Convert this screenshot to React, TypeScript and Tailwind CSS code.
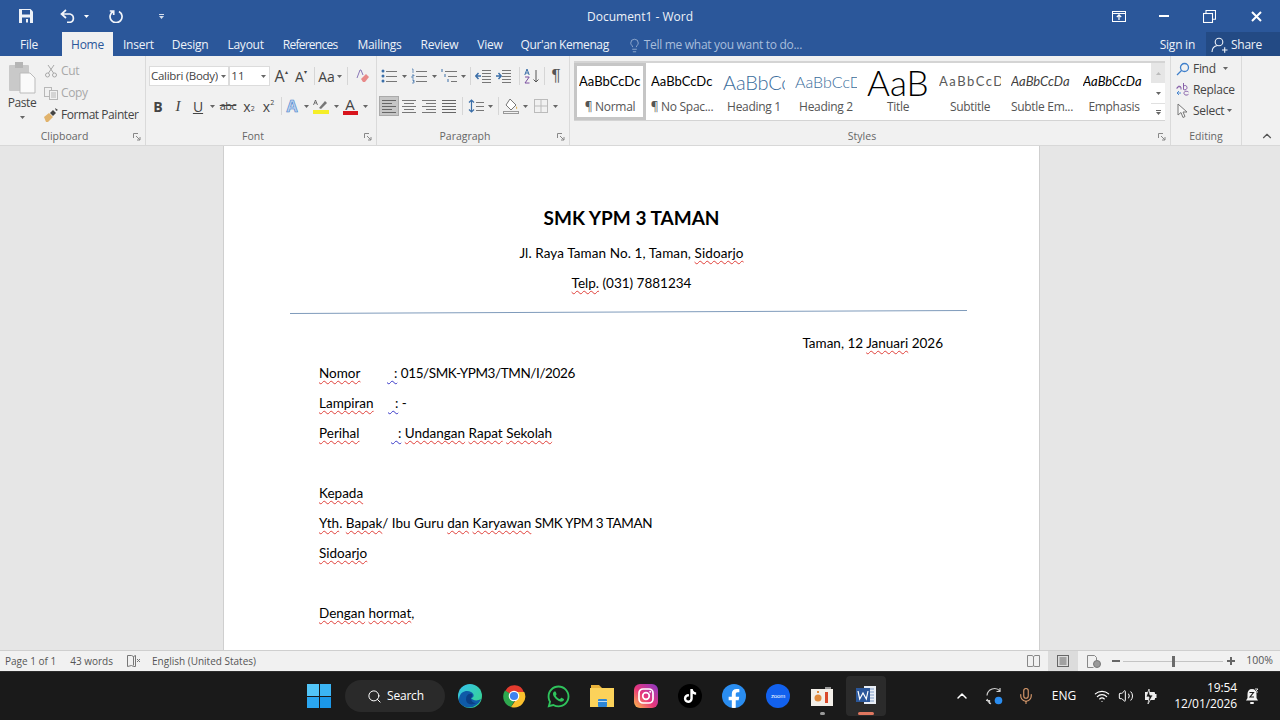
import React from 'react';
import { FaWhatsapp, FaTiktok, FaFacebookF } from 'react-icons/fa';
import { Search, Mic, Volume2, Wifi, ChevronUp, Lightbulb } from 'lucide-react';

const UI = "font-['Open_Sans',sans-serif]";

// --- small helpers ---

const Caret: React.FC<{ className?: string }> = ({ className }) => (
  <svg width="5" height="3" viewBox="0 0 5 3" className={className}>
    <path d="M0 0h5L2.5 3z" fill="#666" />
  </svg>
);

const Launcher = () => (
  <svg width="8" height="8" viewBox="0 0 8 8" fill="none" stroke="#888">
    <path d="M.5 5V.5H5M3 3l4 4M7 4v3H4" />
  </svg>
);

const Lines: React.FC<{ x?: number; w?: number; ys: number[]; color?: string; widths?: number[] }> = ({ x = 0, w = 14, ys, color = '#777', widths }) => (
  <>
    {ys.map((y, i) => {
      const lw = widths ? widths[i] : w;
      return <rect key={y} x={x} y={y} width={lw} height="1" fill={color} />;
    })}
  </>
);

const Ico: React.FC<{ children: React.ReactNode }> = ({ children }) => (
  <svg width="16" height="16" viewBox="0 0 16 16" fill="none">
    {children}
  </svg>
);

const Slot: React.FC<{ w: string; children?: React.ReactNode; className?: string }> = ({ w, children, className }) => (
  <div className={`${w} flex h-5 shrink-0 items-center justify-center ${className ?? ''}`}>{children}</div>
);

const Sep = () => <div className="h-[18px] w-px shrink-0 bg-[#d6d6d6]" />;

const Group: React.FC<{ w: string; label: string; launcher?: boolean; children: React.ReactNode }> = ({ w, label, launcher, children }) => (
  <div className={`${w} flex shrink-0 flex-col border-r border-[#dadada]`}>
    <div className="min-h-0 flex-1">{children}</div>
    <div className="flex h-[18px] items-center pt-[2px] text-[10.5px] text-[#666]">
      <div className="flex-1 text-center">{label}</div>
      {launcher && (
        <div className="flex w-[16px] justify-end pr-[4px]">
          <Launcher />
        </div>
      )}
    </div>
  </div>
);

// --- title bar and tabs ---

const TitleBar = () => (
  <div className="flex h-8 items-center bg-[#2b579a] text-white">
    <div className="flex flex-1 items-center">
      <div className="flex w-[46px] justify-center pl-[6px]">
        <svg width="14" height="14" viewBox="0 0 14 14">
          <path d="M0 0h11.5L14 2.5V14H0z" fill="#eef2f8" />
          <rect x="3" y="1" width="8" height="4.5" fill="#2b579a" />
          <rect x="3" y="8.5" width="8" height="5.5" fill="#2b579a" />
          <rect x="7" y="10" width="2" height="3.5" fill="#eef2f8" />
        </svg>
      </div>
      <div className="ml-[14px] flex items-center gap-[8px]">
        <svg width="16" height="14" viewBox="0 0 16 14" fill="none" stroke="#f2f5fa" strokeWidth="1.7">
          <path d="M6 1 1.5 5 6 9M2 5h8a4.3 4.3 0 0 1 0 8.4H7" />
        </svg>
        <Caret className="[&>path]:fill-white" />
      </div>
      <div className="ml-[20px]">
        <svg width="14" height="14" viewBox="0 0 14 14" fill="none" stroke="#f2f5fa" strokeWidth="1.7">
          <path d="M4.5 2.2A6 6 0 1 0 10 2.4M4.7 6V2H.8" />
        </svg>
      </div>
      <div className="ml-[36px] flex flex-col items-center gap-[1px]">
        <div className="h-px w-[5px] bg-white/80" />
        <Caret className="[&>path]:fill-white/80" />
      </div>
    </div>
    <div className="pt-[2px] text-center text-[12px] text-[#eef2f8]">Document1 - Word</div>
    <div className="flex flex-1 items-center justify-end">
      <svg width="14" height="11" viewBox="0 0 14 11" fill="none" stroke="#fff">
        <rect x=".5" y=".5" width="13" height="10" />
        <path d="M.5 2.5h13" />
        <path d="M7 9V4M4.8 6 7 3.8 9.2 6" strokeWidth="1.2" />
      </svg>
      <div className="ml-[33px] h-[2px] w-[10px] bg-white" />
      <svg width="13" height="13" viewBox="0 0 13 13" fill="none" stroke="#fff" className="ml-[34px]">
        <rect x=".5" y="3.5" width="9" height="9" strokeWidth="1.1" />
        <path d="M3 3.5v-3h9.5v8.8H9.5" strokeWidth="1.1" />
      </svg>
      <svg width="11" height="11" viewBox="0 0 11 11" stroke="#fff" strokeWidth="2" className="ml-[35px] mr-[18px]">
        <path d="m1 1 9 9M10 1l-9 9" />
      </svg>
    </div>
  </div>
);

const TabBar = () => (
  <div className="flex h-6 items-stretch bg-[#2b579a] text-[12px] tracking-[-0.25px] text-[#eef2f8] [&>div]:pt-[2px]">
    <div className="ml-[20px] flex items-center">File</div>
    <div className="ml-[24px] flex w-[51px] items-center justify-center bg-[#f1f1f1] text-[#2b579a]">Home</div>
    <div className="ml-[10px] flex items-center">Insert</div>
    <div className="ml-[18px] flex items-center">Design</div>
    <div className="ml-[19px] flex items-center">Layout</div>
    <div className="ml-[19px] flex items-center tracking-[-0.75px]">References</div>
    <div className="ml-[20px] flex items-center">Mailings</div>
    <div className="ml-[19px] flex items-center">Review</div>
    <div className="ml-[19px] flex items-center">View</div>
    <div className="ml-[18px] flex items-center whitespace-nowrap tracking-[-0.4px]">Qur'an Kemenag</div>
    <div className="ml-[18px] flex items-center text-[#a9bedc]">
      <Lightbulb size={15} strokeWidth={1.2} />
      <span className="ml-[2px] tracking-[-0.3px]">Tell me what you want to do...</span>
    </div>
    <div className="ml-auto flex items-center">Sign in</div>
    <div className="ml-[11px] flex w-[74px] items-center bg-[#234a84] pl-[5px]">
      <svg width="17" height="16" viewBox="0 0 17 16" fill="none" stroke="#eef2f8" strokeWidth="1.1">
        <circle cx="8" cy="5" r="3.800" />
        <path d="M1 15c0-3.500 2.500-6 5.500-6.500M11 13h5.500M13.700 10.300v5.400" />
      </svg>
      <span className="ml-[3px] text-[12px]">Share</span>
    </div>
  </div>
);

// --- ribbon groups ---

const Clipboard = () => (
  <div className="flex h-full">
    <div className="flex w-[44px] flex-col items-center pt-[6px]">
      <svg width="30" height="32" viewBox="0 0 30 32">
        <rect x="2" y="3" width="20" height="26" rx="1" fill="#c9c9c9" />
        <rect x="8" y="0" width="8" height="6" fill="#b5b5b5" />
        <path d="M13 11h10l5 5v15H13z" fill="#fafafa" stroke="#bbb" />
      </svg>
      <div className="mt-[1px] text-[12px] leading-[16px] tracking-[-0.4px] text-[#444]">Paste</div>
      <Caret className="mt-[5px]" />
    </div>
    <div className="flex flex-col pt-[4px] text-[12px] tracking-[-0.35px]">
      <div className="flex h-[22px] items-center text-[#a8a8a8]">
        <svg width="14" height="14" viewBox="0 0 14 14" fill="none" stroke="#a8a8a8"><path d="M4 1l5.500 8M10 1 4.500 9" /><circle cx="3.500" cy="11" r="2" /><circle cx="10.500" cy="11" r="2" /></svg>
        <span className="ml-[3px]">Cut</span>
      </div>
      <div className="flex h-[22px] items-center text-[#a8a8a8]">
        <svg width="14" height="14" viewBox="0 0 14 14" fill="none" stroke="#b8b8b8"><rect x=".5" y="1.500" width="7" height="9" /><rect x="5.500" y="4.500" width="8" height="9" fill="#f1f1f1" /><path d="M7 7h5M7 9h5M7 11h5" /></svg>
        <span className="ml-[3px]">Copy</span>
      </div>
      <div className="flex h-[22px] items-center whitespace-nowrap tracking-[-0.45px] text-[#444]">
        <svg width="14" height="14" viewBox="0 0 14 14"><path d="M0 9l5-4 4 4-5 5H2z" fill="#e1b36c" /><path d="M6 5l3-3 3 3-3 3z" fill="#444" /><path d="M11 0l3 2-2 1z" fill="#444" /></svg>
        <span className="ml-[3px]">Format Painter</span>
      </div>
    </div>
  </div>
);

const Font = () => (
  <div className="flex flex-col pt-[10px] text-[#444]">
    <div className="flex h-5 items-center pl-[3px]">
      <div className="flex h-[20px] w-[81px] items-center justify-between bg-white pl-[2px] pr-[3px] text-[11.500px] tracking-[-0.3px] ring-1 ring-inset ring-[#dcdcdc]">
        <span className="overflow-hidden whitespace-nowrap">Calibri (Body)</span>
        <Caret className="ml-[2px] shrink-0" />
      </div>
      <div className="flex h-[20px] w-[41px] items-center justify-between bg-white pl-[2px] pr-[4px] text-[11.500px] ring-1 ring-inset ring-[#dcdcdc]">
        <span>11</span>
        <Caret />
      </div>
      <Slot w="w-[20px]" className="ml-[1px] text-[16px]">A<span className="-mt-[8px] text-[6px]">▴</span></Slot>
      <Slot w="w-[20px]" className="text-[14px]">A<span className="-mt-[8px] text-[6px]">▾</span></Slot>
      <div className="ml-[3px] mr-[2px]"><Sep /></div>
      <Slot w="w-[26px]" className="text-[14px]">Aa<Caret className="ml-[2px]" /></Slot>
      <div className="ml-[4px] mr-[2px]"><Sep /></div>
      <Slot w="w-[26px]">
        <svg width="14" height="14" viewBox="0 0 14 14"><path d="M1 9 4 1h1l2 5" fill="none" stroke="#8a78b8" /><path d="m5 10 5-5 3 3-4 5H7z" fill="#e88a8a" /></svg>
      </Slot>
    </div>
    <div className="mt-[10px] flex h-5 items-center pl-[3px]">
      <Slot w="w-[18px]" className="text-[14px] font-bold">B</Slot>
      <Slot w="w-[22px]" className="font-['Liberation_Serif',serif] text-[15px] italic">I</Slot>
      <Slot w="w-[18px]" className="text-[14px] underline">U</Slot>
      <Slot w="w-[10px]"><Caret /></Slot>
      <Slot w="w-[22px]" className="text-[11px] tracking-[-0.5px] line-through">abc</Slot>
      <Slot w="w-[20px]" className="text-[14px]">x<span className="mt-[6px] text-[7px]">2</span></Slot>
      <Slot w="w-[19px]" className="text-[14px]">x<span className="-mt-[6px] text-[7px]">2</span></Slot>
      <div className="ml-[3px]"><Sep /></div>
      <Slot w="w-[20px]" className="text-[16px] font-bold text-[#b9d0ee] [-webkit-text-stroke:0.6px_#3f7fcb]">A</Slot>
      <Slot w="w-[8px]"><Caret /></Slot>
      <Slot w="w-[22px]">
        <svg width="18" height="16" viewBox="0 0 18 16"><path d="M1.500 7 3.500 2 5.500 7M2.300 5h2.500" fill="none" stroke="#555" strokeWidth=".8" /><path d="m7 10 6-7 2 2-6 6z" fill="#777" /><rect x="1" y="12" width="16" height="4" fill="#f5ee28" /></svg>
      </Slot>
      <Slot w="w-[8px]"><Caret /></Slot>
      <Slot w="w-[20px]">
        <div className="flex flex-col items-center leading-none">
          <span className="text-[15px] leading-[13px]">A</span>
          <div className="h-[4px] w-[15px] bg-[#d8141c]" />
        </div>
      </Slot>
      <Slot w="w-[10px]"><Caret /></Slot>
    </div>
  </div>
);

const Paragraph = () => (
  <div className="flex flex-col pt-[10px]">
    <div className="flex h-5 items-center pl-[2px]">
      <Slot w="w-[20px]"><Ico><circle cx="2" cy="3" r="1.500" fill="#3a6ea8" /><circle cx="2" cy="8" r="1.500" fill="#3a6ea8" /><circle cx="2" cy="13" r="1.500" fill="#3a6ea8" /><Lines x={5} w={11} ys={[3, 8, 13]} /></Ico></Slot>
      <Slot w="w-[10px]"><Caret /></Slot>
      <Slot w="w-[20px]"><Ico><path d="M1 1h1v4M1 7h2v1H1v2h2M1 12h2v1H2h1v2H1" stroke="#3a6ea8" strokeWidth=".7" /><Lines x={5} w={11} ys={[3, 8, 13]} /></Ico></Slot>
      <Slot w="w-[10px]"><Caret /></Slot>
      <Slot w="w-[20px]"><Ico><path d="M1 1v3M4 6v3M7 11v3" stroke="#3a6ea8" /><Lines x={4} w={12} ys={[3]} /><Lines x={7} w={9} ys={[8]} /><Lines x={10} w={6} ys={[13]} /></Ico></Slot>
      <Slot w="w-[8px]"><Caret /></Slot>
      <div className="ml-[3px] mr-[2px]"><Sep /></div>
      <Slot w="w-[20px]"><Ico><path d="M6 8H1M3.500 5 .8 8l2.700 3" stroke="#3a6ea8" strokeWidth="1.400" /><Lines x={7} w={9} ys={[2, 5, 8, 11, 14]} /></Ico></Slot>
      <Slot w="w-[20px]"><Ico><path d="M1 8h5M3.500 5 6.200 8l-2.700 3" stroke="#3a6ea8" strokeWidth="1.400" /><Lines x={7} w={9} ys={[2, 5, 8, 11, 14]} /></Ico></Slot>
      <div className="ml-[6px] mr-[2px]"><Sep /></div>
      <Slot w="w-[20px]"><Ico><path d="M.8 7 3 1l2.200 6M1.600 5h2.800" stroke="#3a6ea8" /><path d="M1 9h4.200L1 15h4.500" stroke="#7a4fa0" /><path d="M12 2v12M9.500 11.500 12 14l2.500-2.500" stroke="#555" /></Ico></Slot>
      <div className="ml-[2px] mr-[1px]"><Sep /></div>
      <Slot w="w-[20px]" className="font-['Liberation_Sans',sans-serif] text-[17px] text-[#555]">¶</Slot>
    </div>
    <div className="mt-[10px] flex h-5 items-center pl-[2px]">
      <Slot w="w-[20px]" className="bg-[#c6c6c6] ring-1 ring-inset ring-[#aaaaaa]"><Ico><Lines ys={[2, 5, 8, 11, 14]} x={1} widths={[14, 10, 14, 10, 14]} color="#666" /></Ico></Slot>
      <Slot w="w-[20px]"><Ico><Lines ys={[2, 8, 14]} x={1} w={14} /><Lines ys={[5, 11]} x={3} w={10} /></Ico></Slot>
      <Slot w="w-[20px]"><Ico><Lines ys={[2, 8, 14]} x={1} w={14} /><Lines ys={[5, 11]} x={5} w={10} /></Ico></Slot>
      <Slot w="w-[20px]"><Ico><Lines ys={[2, 5, 8, 11, 14]} x={1} w={14} color="#666" /></Ico></Slot>
      <div className="ml-[3px] mr-[3px]"><Sep /></div>
      <Slot w="w-[19px]"><Ico><path d="M3.500 2v12M1 4.500 3.500 2 6 4.500M1 11.500 3.500 14 6 11.500" stroke="#3a6ea8" strokeWidth="1.200" /><Lines x={8} w={8} ys={[4, 8, 12]} /></Ico></Slot>
      <Slot w="w-[10px]"><Caret /></Slot>
      <div className="ml-[3px] mr-[2px]"><Sep /></div>
      <Slot w="w-[20px]"><Ico><path d="m7 1 6 6-5 5-5-5z" stroke="#777" fill="#fff" /><path d="M13 8q2 2 1 3t-1-3" fill="#d9a648" /><rect x=".5" y="13.500" width="15" height="2" fill="none" stroke="#999" /></Ico></Slot>
      <Slot w="w-[8px]"><Caret /></Slot>
      <Slot w="w-[20px]" className="ml-[2px]"><Ico><rect x="1.500" y="1.500" width="13" height="13" stroke="#bbb" /><path d="M8 1.500v13M1.500 8h13" stroke="#bbb" /></Ico></Slot>
      <Slot w="w-[8px]"><Caret /></Slot>
    </div>
  </div>
);

const STYLES = [
  { label: '¶ Normal', prev: 'AaBbCcDc', cls: 'text-[13px] text-black', sel: true },
  { label: '¶ No Spac...', prev: 'AaBbCcDc', cls: 'text-[13px] text-black' },
  { label: 'Heading 1', prev: 'AaBbCc', cls: 'text-[20px] font-light tracking-[-0.2px] text-[#3a6d9c]' },
  { label: 'Heading 2', prev: 'AaBbCcD', cls: 'text-[16px] font-light text-[#3a6d9c]' },
  { label: 'Title', prev: 'AaB', cls: 'text-[35px] font-light leading-[32px] text-black' },
  { label: 'Subtitle', prev: 'AaBbCcD', cls: 'text-[13px] tracking-[1.5px] text-[#5a5a5a]' },
  { label: 'Subtle Em...', prev: 'AaBbCcDa', cls: 'text-[13px] italic text-[#404040]' },
  { label: 'Emphasis', prev: 'AaBbCcDa', cls: 'text-[13px] italic text-black' },
];

const Styles = () => (
  <div className="flex pl-[4px] pt-[5px]">
    <div className="flex h-[60px] w-[577px] border-b border-t-2 border-[#d4d4d4] bg-white">
      {STYLES.map((s) => (
        <div key={s.label} className={`flex h-full w-[72px] shrink-0 flex-col items-center border-[3px] ${s.sel ? 'border-[#c6c6c6]' : 'border-transparent'}`}>
          <div className="flex h-[32px] w-[62px] items-center justify-start overflow-hidden whitespace-nowrap font-['Lato',sans-serif]">
            <span className={s.cls}>{s.prev}</span>
          </div>
          <div className="whitespace-nowrap text-[12px] tracking-[-0.3px] text-[#555]">{s.label}</div>
        </div>
      ))}
    </div>
    <div className="flex h-[60px] w-[14px] flex-col border-b border-t-2 border-[#d4d4d4] bg-white">
      <div className="flex h-[20px] items-center justify-center bg-[#e6e6e6]"><Caret className="rotate-180 [&>path]:fill-[#bbb]" /></div>
      <div className="flex h-[20px] items-center justify-center"><Caret /></div>
      <div className="flex flex-1 flex-col items-center justify-center gap-px border-t border-[#e0e0e0]"><div className="h-px w-[5px] bg-[#666]" /><Caret /></div>
    </div>
  </div>
);

const Editing = () => (
  <div className="flex flex-col pl-[5px] pt-[2px] text-[12px] tracking-[-0.3px] text-[#444]">
    <div className="flex h-[21px] items-center">
      <svg width="14" height="14" viewBox="0 0 14 14" fill="none" stroke="#3f7fcb" strokeWidth="1.300"><circle cx="8.500" cy="5.500" r="4" /><path d="M5.500 8.500 1 13" /></svg>
      <span className="ml-[3px]">Find</span>
      <Caret className="ml-[7px]" />
    </div>
    <div className="flex h-[21px] items-center">
      <svg width="15" height="15" viewBox="0 0 15 15" fill="none" strokeWidth=".9">
        <path d="M1 6.500c0-3 4-3 4-.5v1.500M5 5c-2.500-.5-4 0-4 1.500M7.500 1v6.500c2 1 3.500 0 3.500-2s-2-2.500-3.500-1.500" stroke="#7a4fa0" />
        <path d="M12.500 10c-2-1.500-5-.5-4.500 1.500s3 2 4.500.8" stroke="#7a4fa0" />
        <path d="M1 11h4M3 9l-2 2 2 2" stroke="#3f7fcb" />
      </svg>
      <span className="ml-[2px]">Replace</span>
    </div>
    <div className="flex h-[21px] items-center">
      <svg width="14" height="16" viewBox="0 0 14 16" fill="#f7f7f7" stroke="#777"><path d="M2 1v11l3-2.500 2 5 2-1-2-4.500h4z" /></svg>
      <span className="ml-[3px]">Select</span>
      <Caret className="ml-[3px]" />
    </div>
  </div>
);

const Ribbon = () => (
  <div className="flex h-[89px] bg-[#f1f1f1]">
    <Group w="w-[146px]" label="Clipboard" launcher><Clipboard /></Group>
    <Group w="w-[231px]" label="Font" launcher><Font /></Group>
    <Group w="w-[193px]" label="Paragraph" launcher><Paragraph /></Group>
    <Group w="w-[601px]" label="Styles" launcher><Styles /></Group>
    <Group w="w-[71px]" label="Editing"><Editing /></Group>
    <div className="flex flex-1 items-end justify-end pb-[2px] pr-[6px]">
      <ChevronUp size={14} color="#555" />
    </div>
  </div>
);

// --- document ---

const Sq: React.FC<{ c?: 'red' | 'blue'; children: React.ReactNode }> = ({ c = 'red', children }) => (
  <span className={`underline decoration-wavy decoration-[0.8px] underline-offset-2 ${c === 'red' ? 'decoration-[#e0403a]' : 'decoration-[#3a3ac8]'}`}>{children}</span>
);

const Line: React.FC<{ className?: string; children?: React.ReactNode }> = ({ className, children }) => (
  <div className={`h-[30px] whitespace-pre pl-[95px] leading-[30px] ${className ?? ''}`}>{children}</div>
);

const Page = () => (
  <div className="ml-[223px] h-full w-[817px] overflow-hidden border-x border-[#cfcfcf] bg-white pt-[57px] font-['Lato',sans-serif] text-[13.500px] text-black">
    <div className="text-center text-[19px] font-bold leading-[30px]">SMK YPM 3 TAMAN</div>
    <div className="mt-[5px] h-[30px] text-center leading-[30px] tracking-[0.1px]">Jl. Raya Taman No. 1, Taman, <Sq>Sidoarjo</Sq></div>
    <div className="h-[30px] text-center leading-[30px]"><Sq>Telp.</Sq> (031) 7881234</div>
    <svg width="677" height="4" viewBox="0 0 677 4" className="ml-[66px] mt-[12px] block" fill="none">
      <path d="M0 3.500 677 .5" stroke="#7f9bbb" strokeWidth="1" />
    </svg>
    <div className="mt-[14px] h-[30px] whitespace-pre pr-[96px] text-right leading-[30px]">Taman, 12 <Sq>Januari</Sq> 2026</div>
    <Line>
      <span className="inline-block w-[68px]"><Sq>Nomor</Sq></span>
      <Sq c="blue">{'  :'}</Sq> <span className="tracking-[-0.4px]">015/SMK-YPM3/TMN/I/2026</span>
    </Line>
    <Line>
      <span className="inline-block w-[69px]"><Sq>Lampiran</Sq></span>
      <Sq c="blue">{'  :'}</Sq> -
    </Line>
    <Line>
      <span className="inline-block w-[72px]"><Sq>Perihal</Sq></span>
      <Sq c="blue">{'  :'}</Sq> <Sq>Undangan</Sq> <Sq>Rapat</Sq> <Sq>Sekolah</Sq>
    </Line>
    <Line />
    <Line><Sq>Kepada</Sq></Line>
    <Line><Sq>Yth</Sq>. <Sq>Bapak</Sq>/ Ibu Guru <Sq>dan</Sq> <Sq>Karyawan</Sq> <span className="tracking-[-0.4px]">SMK YPM 3 TAMAN</span></Line>
    <Line><Sq>Sidoarjo</Sq></Line>
    <Line />
    <Line><Sq>Dengan</Sq> <Sq>hormat</Sq>,</Line>
  </div>
);

// --- status bar ---

const StatusBar = () => (
  <div className="flex h-[20px] items-center bg-[#f1f1f1] text-[10px] text-[#555]">
    <span className="ml-[5px]">Page 1 of 1</span>
    <span className="ml-[14px]">43 words</span>
    <svg width="14" height="12" viewBox="0 0 14 12" fill="none" stroke="#777" className="ml-[14px]">
      <path d="M.5.500h4l2 1 2-1v11h-2l-2-1-4 1zM6.500 1.500v9M10 4l3 3M13 4l-3 3" />
    </svg>
    <span className="ml-[11px]">English (United States)</span>
    <div className="ml-auto flex h-full items-center">
      <svg width="13" height="12" viewBox="0 0 13 12" fill="none" stroke="#888"><path d="M.5.500h4.500l1.500 1 1.500-1h4.500v11h-4.500l-1.500-.5-1.500.5H.5zM6.500 1.500v9.500" /></svg>
      <div className="ml-[8px] flex h-full w-[30px] items-center justify-center bg-[#dcdcdc]">
        <svg width="12" height="12" viewBox="0 0 12 12" fill="none" stroke="#666"><rect x=".5" y=".5" width="11" height="11" /><path d="M2.500 3h7M2.500 5h7M2.500 7h7M2.500 9h7" /></svg>
      </div>
      <svg width="14" height="13" viewBox="0 0 14 13" fill="none" stroke="#888" className="ml-[9px]"><path d="M.5.500h7l2 2v3M.5.500v12h6" /><circle cx="10" cy="9" r="3.500" fill="#999" stroke="#777" /></svg>
      <div className="ml-[11px] h-[2px] w-[8px] bg-[#666]" />
      <div className="ml-[3px] flex h-px w-[100px] items-center justify-center bg-[#c4c4c4]">
        <div className="h-[11px] w-[3px] bg-[#6a6a6a]" />
      </div>
      <div className="ml-[4px] flex h-[8px] w-[8px] items-center justify-center">
        <div className="relative h-[2px] w-[8px] bg-[#666] after:absolute after:left-[3px] after:top-[-3px] after:h-[8px] after:w-[2px] after:bg-[#666]" />
      </div>
      <span className="ml-[11px] mr-[7px] text-[10.500px]">100%</span>
    </div>
  </div>
);

// --- taskbar ---

const TaskIcon: React.FC<{ children: React.ReactNode; active?: boolean; running?: boolean }> = ({ children, active, running }) => (
  <div className={`relative flex h-[40px] items-center justify-center rounded ${active ? 'mx-[2px] w-[40px] bg-[#2b2b2b]' : 'w-[44px]'}`}>
    {children}
    {running && <div className={`absolute bottom-[1px] h-[3px] rounded-full ${active ? 'w-[16px] bg-[#e0775f]' : 'w-[5px] bg-[#9a9a9a]'}`} />}
  </div>
);

const Taskbar = () => (
  <div className="flex h-[49px] items-center border-t border-[#2c2c2c] bg-[#1a1a1a] text-white">
    <div className="ml-[307px] grid h-[24px] w-[24px] grid-cols-2 gap-[1px]">
      <div className="bg-[#52c5f8]" />
      <div className="bg-[#3bb4f4]" />
      <div className="bg-[#2aa6f0]" />
      <div className="bg-[#1b97e8]" />
    </div>
    <div className="ml-[14px] flex h-[32px] w-[100px] items-center rounded-full bg-[#2a2a2a] pl-[22px] text-[12px] tracking-[-0.2px]">
      <Search size={15} strokeWidth={1.6} />
      <span className="ml-[5px]">Search</span>
    </div>
    <div className="ml-[3px] flex items-center">
      <TaskIcon>
        <svg width="24" height="24" viewBox="0 0 24 24">
          <defs>
            <linearGradient id="edgeA" x1="0" y1="0" x2="1" y2="1"><stop offset="0" stopColor="#35c1f1" /><stop offset="1" stopColor="#36d680" /></linearGradient>
          </defs>
          <circle cx="12" cy="12" r="12" fill="url(#edgeA)" />
          <path d="M1 15C2 7 9 6 13 8c4 2 3 6 0 6 2 3 7 3 10 1-2 6-9 10-15 8-5-2-8-5-7-8z" fill="#0f5aa8" />
          <path d="M8 15c0-4 3-6 6-5 1 2-1 4-1 4 0 3 2 5 5 5-5 3-10 1-10-4z" fill="#0b3f86" />
        </svg>
      </TaskIcon>
      <TaskIcon>
        <svg width="24" height="24" viewBox="0 0 24 24">
          <path d="M12 12 3.300 7A10 10 0 0 1 21.800 8H12z" fill="#e33b2e" />
          <path d="M12 12 3 6.500A11 11 0 0 0 9 23l4-7z" fill="#2fa84f" />
          <path d="M12 8h10.300A11 11 0 0 1 9 23l5.500-8z" fill="#fbc02d" />
          <circle cx="12" cy="12" r="5.300" fill="#fff" />
          <circle cx="12" cy="12" r="4.100" fill="#3f82f0" />
        </svg>
      </TaskIcon>
      <TaskIcon><FaWhatsapp size={25} color="#2fc35c" /></TaskIcon>
      <TaskIcon>
        <svg width="24" height="22" viewBox="0 0 24 22">
          <path d="M1 0h8l3 3H1z" fill="#e9b23a" />
          <rect x="0" y="3" width="24" height="19" fill="#fbd25a" />
          <rect x="8" y="14" width="9" height="8" rx="1" fill="#2d86d6" />
          <rect x="8" y="16" width="9" height="1" fill="#bcdcf5" />
        </svg>
      </TaskIcon>
      <TaskIcon>
        <svg width="24" height="24" viewBox="0 0 24 24" fill="none">
          <defs>
            <linearGradient id="igA" x1="0" y1="1" x2="1" y2="0"><stop offset="0" stopColor="#fdc04a" /><stop offset=".45" stopColor="#e8367a" /><stop offset="1" stopColor="#8a3ac8" /></linearGradient>
          </defs>
          <rect width="24" height="24" rx="6" fill="url(#igA)" />
          <rect x="5" y="5" width="14" height="14" rx="4" stroke="#fff" strokeWidth="1.700" />
          <circle cx="12" cy="12" r="3.300" stroke="#fff" strokeWidth="1.700" />
          <circle cx="16.200" cy="7.800" r="1" fill="#fff" />
        </svg>
      </TaskIcon>
      <TaskIcon>
        <div className="flex h-[24px] w-[24px] items-center justify-center rounded-full bg-black"><FaTiktok size={14} color="#fff" /></div>
      </TaskIcon>
      <TaskIcon>
        <div className="flex h-[24px] w-[24px] items-end justify-center overflow-hidden rounded-full bg-[#2a8df0]"><FaFacebookF size={20} color="#fff" className="translate-y-[1px]" /></div>
      </TaskIcon>
      <TaskIcon>
        <div className="flex h-[24px] w-[24px] items-center justify-center rounded-full bg-[#1261ee] font-['Liberation_Sans',sans-serif] text-[6px] tracking-tight">zoom</div>
      </TaskIcon>
      <TaskIcon running>
        <svg width="22" height="19" viewBox="0 0 22 19">
          <rect x="14" y="0" width="6" height="3" fill="#9a9a9a" />
          <rect y="2" width="22" height="17" fill="#f3efe9" />
          <circle cx="7" cy="11" r="3.500" fill="#e08a3c" />
          <rect x="14" y="5" width="3" height="11" fill="#d9482b" />
          <rect x="6" y="4" width="2" height="2" fill="#e08a3c" />
        </svg>
      </TaskIcon>
      <TaskIcon active running>
        <svg width="20" height="18" viewBox="0 0 20 18" className="-mt-[2px]">
          <rect x="8" y="0" width="12" height="18" fill="#e9eef6" />
          <path d="M10 3h8M10 6h8M10 9h8M10 12h8M10 15h8" stroke="#7f9cc8" />
          <rect x="0" y="2" width="14" height="14" fill="#2b579a" />
          <path d="m2 5 1.700 8L7 7l3.300 6L12 5" fill="none" stroke="#fff" strokeWidth="1.200" />
        </svg>
      </TaskIcon>
    </div>
    <div className="ml-[62px] flex w-[24px] justify-center"><ChevronUp size={16} strokeWidth={2.2} /></div>
    <div className="ml-[8px] flex w-[24px] justify-center">
      <svg width="19" height="19" viewBox="0 0 19 19" fill="none" stroke="#cfcfcf" strokeWidth="1.200">
        <path d="M2 8.500a7.500 7.500 0 0 1 13-4.500M2 12a7.500 7.500 0 0 0 4 5" />
        <path d="M15 1v3.500h-3.500M1 13.500h3.500V17" />
        <circle cx="13.500" cy="13.500" r="3.800" fill="#2a8df0" stroke="none" />
      </svg>
    </div>
    <div className="ml-[8px] flex w-[24px] justify-center"><Mic size={18} color="#d99a6c" strokeWidth={1.5} /></div>
    <div className="ml-[12px] w-[28px] text-center text-[12px]">ENG</div>
    <div className="ml-[12px] flex w-[24px] justify-center"><Wifi size={16} strokeWidth={1.8} /></div>
    <div className="flex w-[24px] justify-center"><Volume2 size={16} strokeWidth={1.5} /></div>
    <div className="flex w-[24px] justify-center">
      <svg width="15" height="15" viewBox="0 0 15 15" fill="#eee"><path d="M2 3h9a1 1 0 0 1 1 1v1h1.500v4H12v1a1 1 0 0 1-1 1H2z" /><path d="M6 0 3 8h3l-1 7 5-9H7z" fill="#1a1a1a" stroke="#eee" strokeWidth=".8" /></svg>
    </div>
    <div className="ml-auto text-right text-[12px] leading-[16px] tracking-[-0.1px]">
      <div>19:54</div>
      <div>12/01/2026</div>
    </div>
    <div className="ml-[8px] mr-[21px] flex w-[14px] justify-center">
      <svg width="14" height="17" viewBox="0 0 14 17">
        <path d="M7 1c-3 0-4.500 2-4.500 5v4L1 12.500h12L11.500 10V6C11.500 3 10 1 7 1z" fill="#f2f2f2" />
        <rect x="5" y="14" width="4" height="2" rx="1" fill="#f2f2f2" />
        <path d="M4.500 4.500h4L5 9h4" fill="none" stroke="#1a1a1a" strokeWidth="1.100" />
        <path d="M10 1h3l-3 3h3" fill="none" stroke="#f2f2f2" strokeWidth=".9" />
      </svg>
    </div>
  </div>
);

export default function App() {
  return (
    <div className={`flex h-[720px] w-[1280px] flex-col overflow-hidden ${UI}`}>
      <TitleBar />
      <TabBar />
      <Ribbon />
      <div className="min-h-0 flex-1 border-t border-[#d8d8d8] bg-[#e6e6e6]">
        <Page />
      </div>
      <div className="h-px bg-[#cfcfcf]" />
      <StatusBar />
      <Taskbar />
    </div>
  );
}
